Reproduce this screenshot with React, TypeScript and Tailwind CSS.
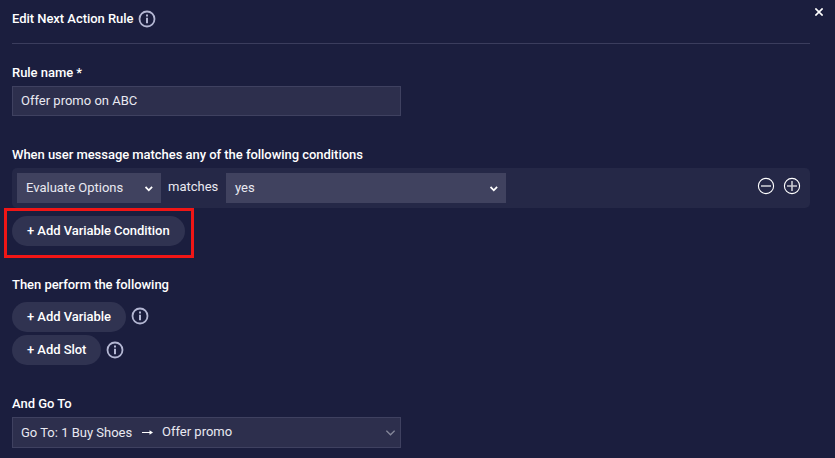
import React from "react";

function InfoIcon({ className = "" }: { className?: string }) {
  return (
    <svg viewBox="0 0 18 18" className={`h-[18px] w-[18px] shrink-0 text-[#b4b7d3] ${className}`} fill="none" stroke="currentColor">
      <circle cx="9" cy="9" r="7.5" strokeWidth="1.8" />
      <path d="M9 7.8v5.4M9 4.6v1.9" strokeWidth="2" />
    </svg>
  );
}

function Chevron() {
  return (
    <svg viewBox="0 0 8 6" className="mt-px h-[6px] w-[8px] shrink-0" fill="none" stroke="#fff" strokeWidth="1.8">
      <path d="M0.5 0.9L3.8 4.3L7.1 0.9" />
    </svg>
  );
}

function Heading({ children, className = "" }: { children: React.ReactNode; className?: string }) {
  return <div className={`h-4 text-[13px] leading-4 font-medium tracking-[-0.04px] whitespace-nowrap text-white ${className}`}>{children}</div>;
}

function Pill({ children, className = "" }: { children: React.ReactNode; className?: string }) {
  return (
    <button className={`flex h-[30px] items-center rounded-full bg-[#303351] pl-[15px] text-[13px] leading-4 font-medium tracking-[-0.05px] whitespace-nowrap text-white ${className}`}>
      {children}
    </button>
  );
}

export default function App() {
  return (
    <div className="relative h-[458px] w-[835px] overflow-hidden bg-[#1b1e3e] pl-3 font-['Roboto',sans-serif] text-[13px] leading-4 text-[#e9e9f1]">
      <header className="flex h-11 w-[798px] items-start border-b border-[#3b3d5d] pt-[10px]">
        <Heading className="mt-[1px] w-[126px]">Edit Next Action Rule</Heading>
        <InfoIcon />
      </header>
      <button aria-label="Close" className="absolute top-[8px] left-[815px] h-2 w-2">
        <svg viewBox="0 0 8 8" className="h-2 w-2" stroke="#fff" strokeWidth="1.6">
          <path d="M0.4 0.4L7.6 7.6M7.6 0.4L0.4 7.6" />
        </svg>
      </button>

      <Heading className="mt-[21px]">Rule name *</Heading>
      <div className="mt-[5px] flex h-[30px] w-[389px] items-center border border-[#3f4160] bg-[#2d2f4d] pl-2">
        Offer promo on ABC
      </div>

      <Heading className="mt-[31px]">When user message matches any of the following conditions</Heading>
      <div className="mt-[5px] flex h-10 w-[798px] items-center rounded-[5px] bg-[#252847] pl-[5px]">
        <div className="flex h-[30px] w-[144px] items-center justify-between bg-[#40425f] pr-2 pl-[9px]">
          Evaluate Options
          <Chevron />
        </div>
        <span className="-mt-[2px] w-[65px] pl-[7px]">matches</span>
        <div className="flex h-[30px] w-[280px] items-center justify-between bg-[#40425f] pr-2 pl-[9px]">
          yes
          <Chevron />
        </div>
        <div className="-mt-[4px] mr-[9px] ml-auto flex gap-2 text-white">
          <svg viewBox="0 0 18 18" className="h-[18px] w-[18px]" fill="none" stroke="currentColor">
            <circle cx="9" cy="9" r="7.6" strokeWidth="1.1" />
            <path d="M4 9h10" strokeWidth="1.6" opacity="0.75" />
          </svg>
          <svg viewBox="0 0 18 18" className="h-[18px] w-[18px]" fill="none" stroke="currentColor">
            <circle cx="9" cy="9" r="7.6" strokeWidth="1.1" />
            <path d="M4 9h10M9 4v10" strokeWidth="1.6" opacity="0.75" />
          </svg>
        </div>
      </div>

      <Pill className="mt-2 w-[173px]">+ Add Variable Condition</Pill>
      <div className="absolute top-[208px] left-[4px] h-[50px] w-[190px] border-[3px] border-[#f01616]" />

      <Heading className="mt-[31px]">Then perform the following</Heading>
      <div className="mt-[9px] flex gap-[5px]">
        <Pill className="w-[114px]">+ Add Variable</Pill>
        <InfoIcon className="mt-[5px]" />
      </div>
      <div className="mt-[3px] flex gap-[5px]">
        <Pill className="w-[89px]">+ Add Slot</Pill>
        <InfoIcon className="mt-[6px]" />
      </div>

      <Heading className="mt-[31px]">And Go To</Heading>
      <div className="mt-[5px] flex h-[31px] w-[389px] items-center border border-[#3f4160] bg-[#2d2f4d] pr-[5px] pl-2">
        <span className="w-[121px]">Go To: 1 Buy Shoes</span>
        <svg viewBox="0 0 11 7" className="h-[7px] w-[11px]" stroke="#fff" strokeWidth="1">
          <path d="M0 3.5h8" />
          <path d="M7.5 1.2L11 3.5L7.5 5.8z" fill="#fff" stroke="none" />
        </svg>
        <span className="-mt-[2px] ml-[9px]">Offer promo</span>
        <svg viewBox="0 0 9 6" className="ml-auto h-[6px] w-[9px]" fill="none" stroke="#85879a" strokeWidth="1.3">
          <path d="M0.4 0.7L4.5 4.8L8.6 0.7" />
        </svg>
      </div>
    </div>
  );
}
